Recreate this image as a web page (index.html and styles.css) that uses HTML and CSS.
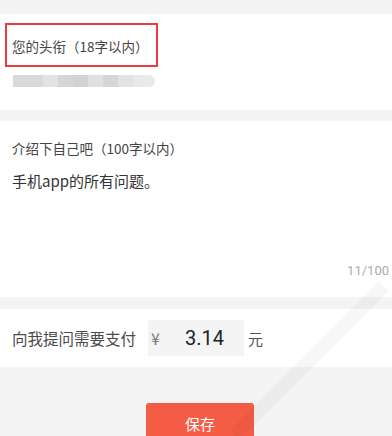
FILE: index.html
```html
<!DOCTYPE html>
<html lang="zh">
<head>
<meta charset="utf-8">
<link rel="stylesheet" href="styles.css">
</head>
<body>
<div class="page">
  <section class="card card-title">
    <div class="highlight">
      <span class="label">您的头衔（18字以内）</span>
    </div>
    <div class="mosaic"></div>
  </section>
  <section class="card card-intro">
    <div class="label">介绍下自己吧（100字以内）</div>
    <div class="content">手机app的所有问题。</div>
    <div class="counter">11/100</div>
  </section>
  <section class="card card-pay">
    <span class="pay-label">向我提问需要支付</span>
    <div class="amount-box">
      <span class="yen">¥</span>
      <span class="amount">3.14</span>
    </div>
    <span class="unit">元</span>
  </section>
  <div class="actions">
    <button class="save">保存</button>
  </div>
  <svg class="watermark" width="392" height="436" viewBox="0 0 392 436" aria-hidden="true">
    <polyline points="384,286 370,300 356,314 342,328 328,342 314,356 300,370 286,384 272,398 258,412 244,426 234,436" fill="none" stroke="#000" stroke-opacity="0.03" stroke-width="14" stroke-linejoin="miter"/>
  </svg>
</div>
</body>
</html>
```
FILE: styles.css
```css
html, body {
  margin: 0;
  padding: 0;
  background: #f4f4f4;
  font-family: "Noto Sans CJK SC", "Noto Sans", sans-serif;
  color: #333;
}
.page {
  position: relative;
  width: 392px;
  height: 436px;
  overflow: hidden;
  padding-top: 14px;
  box-sizing: border-box;
}
.card {
  background: #fff;
}
.card-title {
  height: 96px;
  padding-top: 9px;
  box-sizing: border-box;
}
.highlight {
  margin-left: 5px;
  width: 153px;
  height: 44px;
  box-sizing: border-box;
  border: 2px solid #ec3b3f;
  padding: 8px 0 0 5px;
}
.label {
  font-size: 13.5px;
  line-height: 18px;
  color: #444;
  white-space: nowrap;
}
.mosaic {
  margin: 8px 0 0 13px;
  width: 142px;
  height: 12px;
  border-radius: 0 6px 6px 0;
  background: linear-gradient(to right,
    #d9d9d9 0 30px, #e3e3e3 30px 45px, #d6d6d6 45px 60px, #d2d2d2 60px 75px,
    #e0e0e0 75px 90px, #d6d6d6 90px 105px, #e2e2e2 105px 120px, #e9e9e9 120px 142px);
}
.card-intro {
  margin-top: 11px;
  height: 176px;
  padding: 18px 3px 0 12px;
  box-sizing: border-box;
  display: flex;
  flex-direction: column;
}
.content {
  margin-top: 14px;
  font-size: 15px;
  line-height: 20px;
  color: #333;
}
.counter {
  margin-top: auto;
  margin-bottom: 18px;
  align-self: flex-end;
  font-size: 13px;
  line-height: 16px;
  color: #ababab;
  font-family: Roboto, "Noto Sans", sans-serif;
}
.card-pay {
  margin-top: 12px;
  height: 58px;
  padding-left: 12px;
  display: flex;
  align-items: center;
}
.pay-label {
  font-size: 15.5px;
  color: #4a4a4a;
  width: 136px;
  white-space: nowrap;
}
.amount-box {
  width: 96px;
  height: 36px;
  background: #f4f4f4;
  display: flex;
  align-items: center;
  padding-left: 3px;
  box-sizing: border-box;
}
.yen {
  font-size: 16px;
  color: #777;
  width: 34px;
  font-family: "Noto Sans CJK SC", sans-serif;
}
.amount {
  font-family: Roboto, "Noto Sans", sans-serif;
  font-size: 20px;
  color: #222;
}
.unit {
  margin-left: 4px;
  font-size: 15px;
  color: #555;
}
.actions {
  padding-top: 36px;
  padding-left: 146px;
}
.save {
  width: 108px;
  height: 40px;
  border: none;
  border-radius: 3px;
  background: #f55c46;
  color: #fff;
  font-family: "Noto Sans CJK SC", sans-serif;
  font-size: 15px;
  padding: 0;
  display: block;
}
.watermark {
  position: absolute;
  left: 0;
  top: 0;
  pointer-events: none;
}
```
